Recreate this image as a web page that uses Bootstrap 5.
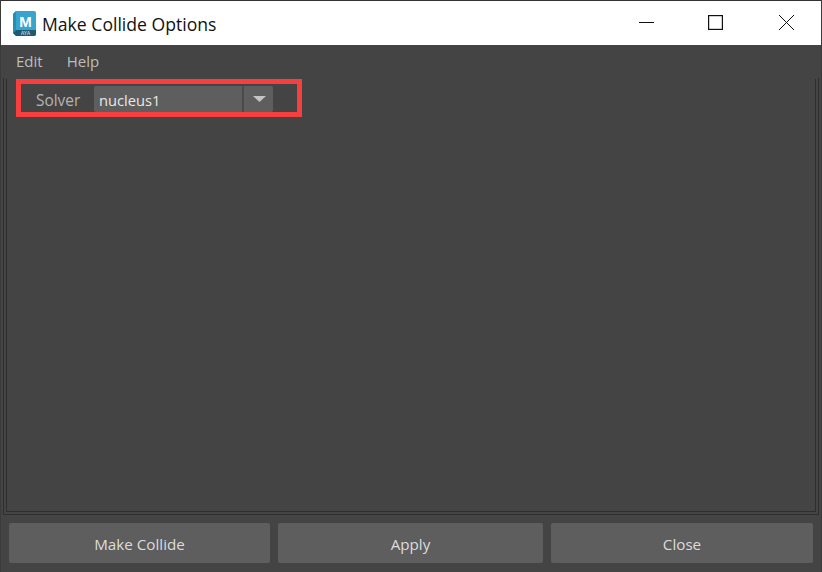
<!DOCTYPE html>
<html lang="en">
<head>
<meta charset="utf-8">
<title>Make Collide Options</title>
<link href="https://cdn.jsdelivr.net/npm/bootstrap@5.3.0/dist/css/bootstrap.min.css" rel="stylesheet">
<style>
html,body{height:572px;overflow:hidden;margin:0;background:#444;font-family:"Open Sans","Noto Sans",sans-serif;}
.win{height:572px;display:flex;flex-direction:column;border-left:1px solid #3a3a3a;border-right:1px solid #3a3a3a;}
.tbar{height:45px;background:#fff;border-top:1px solid #333;flex:none;color:#111;}
.tlogo{margin-left:12px;margin-right:6px;flex:none;}
.ttext{font-size:17.6px;line-height:24px;padding-top:2px;}
.wbtn{width:45px;height:43px;display:flex;align-items:center;justify-content:center;}
.wctl{margin-right:12px;align-self:flex-start;}
.wgap-a{margin-left:24px;}
.wgap-b{margin-left:26px;}
.mbar{height:33px;flex:none;padding-left:15px;gap:24px;color:#bdbdbd;font-size:15px;line-height:33px;}
.panel{flex:1;margin:0 2px;border:1px solid #2e2e2e;border-top:0;padding:1px 2px 2px;min-height:0;}
.panel-in{height:100%;border:1px solid #2e2e2e;border-top:0;padding-left:9px;}
.hl{width:286px;height:38px;border:5px solid #f5403f;padding-left:15px;display:flex;align-items:flex-end;}
.slabel{color:#b4b4b4;font-size:15.4px;width:58px;height:26px;line-height:29px;}
.combo{width:179px;height:26px;background:#5e5e5e;border-radius:2px;color:#e8e8e8;font-size:14.7px;line-height:28px;display:flex;}
.ctext{width:150px;padding-left:5px;border-right:2px solid #4a4a4a;}
.carrow{flex:1;display:flex;align-items:center;justify-content:center;padding-left:2px;}
.bbar{height:57px;flex:none;padding:8px 8px 9px;display:grid;grid-template-columns:261px 265px 262px;gap:8px;}
.bbtn{background:#5e5e5e;color:#dcdcdc;border:0;border-radius:2px;font-size:15.2px;padding:4px 0 0;line-height:1;height:40px;}
.bbtn:hover{background:#5e5e5e;color:#dcdcdc;}
</style>
</head>
<body>
<div class="win">
  <div class="tbar d-flex align-items-center">
    <svg class="tlogo" width="23" height="25" viewBox="0 0 23 25"><path d="M3 0H21Q23 0 23 2V23Q23 25 21 25H3L0 22V3Z" fill="#37a5cc"/><path d="M3 19H23V23Q23 25 21 25H3L0 22Z" fill="#1d5b73"/><path d="M3 0L0 3V22L3 19Z" fill="#2a8cb0"/><text x="12.5" y="16" text-anchor="middle" font-family="Liberation Sans" font-weight="700" font-size="15" fill="#fff">M</text><text x="12.5" y="24" text-anchor="middle" font-family="Liberation Sans" font-weight="700" font-size="5" fill="#b8ccd4">AYA</text></svg>
    <span class="ttext flex-grow-1">Make Collide Options</span>
    <div class="d-flex wctl">
      <div class="wbtn"><svg width="15" height="15" viewBox="0 0 15 15"><path d="M0 7.5H15" stroke="#111" stroke-width="1"/></svg></div>
      <div class="wbtn wgap-a"><svg width="15" height="15" viewBox="0 0 15 15"><rect x="0.6" y="0.6" width="13.8" height="13.8" fill="none" stroke="#111" stroke-width="1.2"/></svg></div>
      <div class="wbtn wgap-b"><svg width="15" height="15" viewBox="0 0 15 15"><path d="M0 0L15 15M15 0L0 15" stroke="#111" stroke-width="1"/></svg></div>
    </div>
  </div>
  <div class="mbar d-flex"><span>Edit</span><span>Help</span></div>
  <div class="panel"><div class="panel-in">
    <div class="hl">
      <span class="slabel">Solver</span>
      <div class="combo"><span class="ctext">nucleus1</span><span class="carrow"><svg width="13" height="6" viewBox="0 0 13 6"><path d="M0 0H13L6.5 6Z" fill="#c4c4c4"/></svg></span></div>
    </div>
  </div></div>
  <div class="bbar">
    <button type="button" class="btn bbtn">Make Collide</button>
    <button type="button" class="btn bbtn">Apply</button>
    <button type="button" class="btn bbtn">Close</button>
  </div>
</div>
<script src="https://cdn.jsdelivr.net/npm/bootstrap@5.3.0/dist/js/bootstrap.bundle.min.js"></script>
</body>
</html>
